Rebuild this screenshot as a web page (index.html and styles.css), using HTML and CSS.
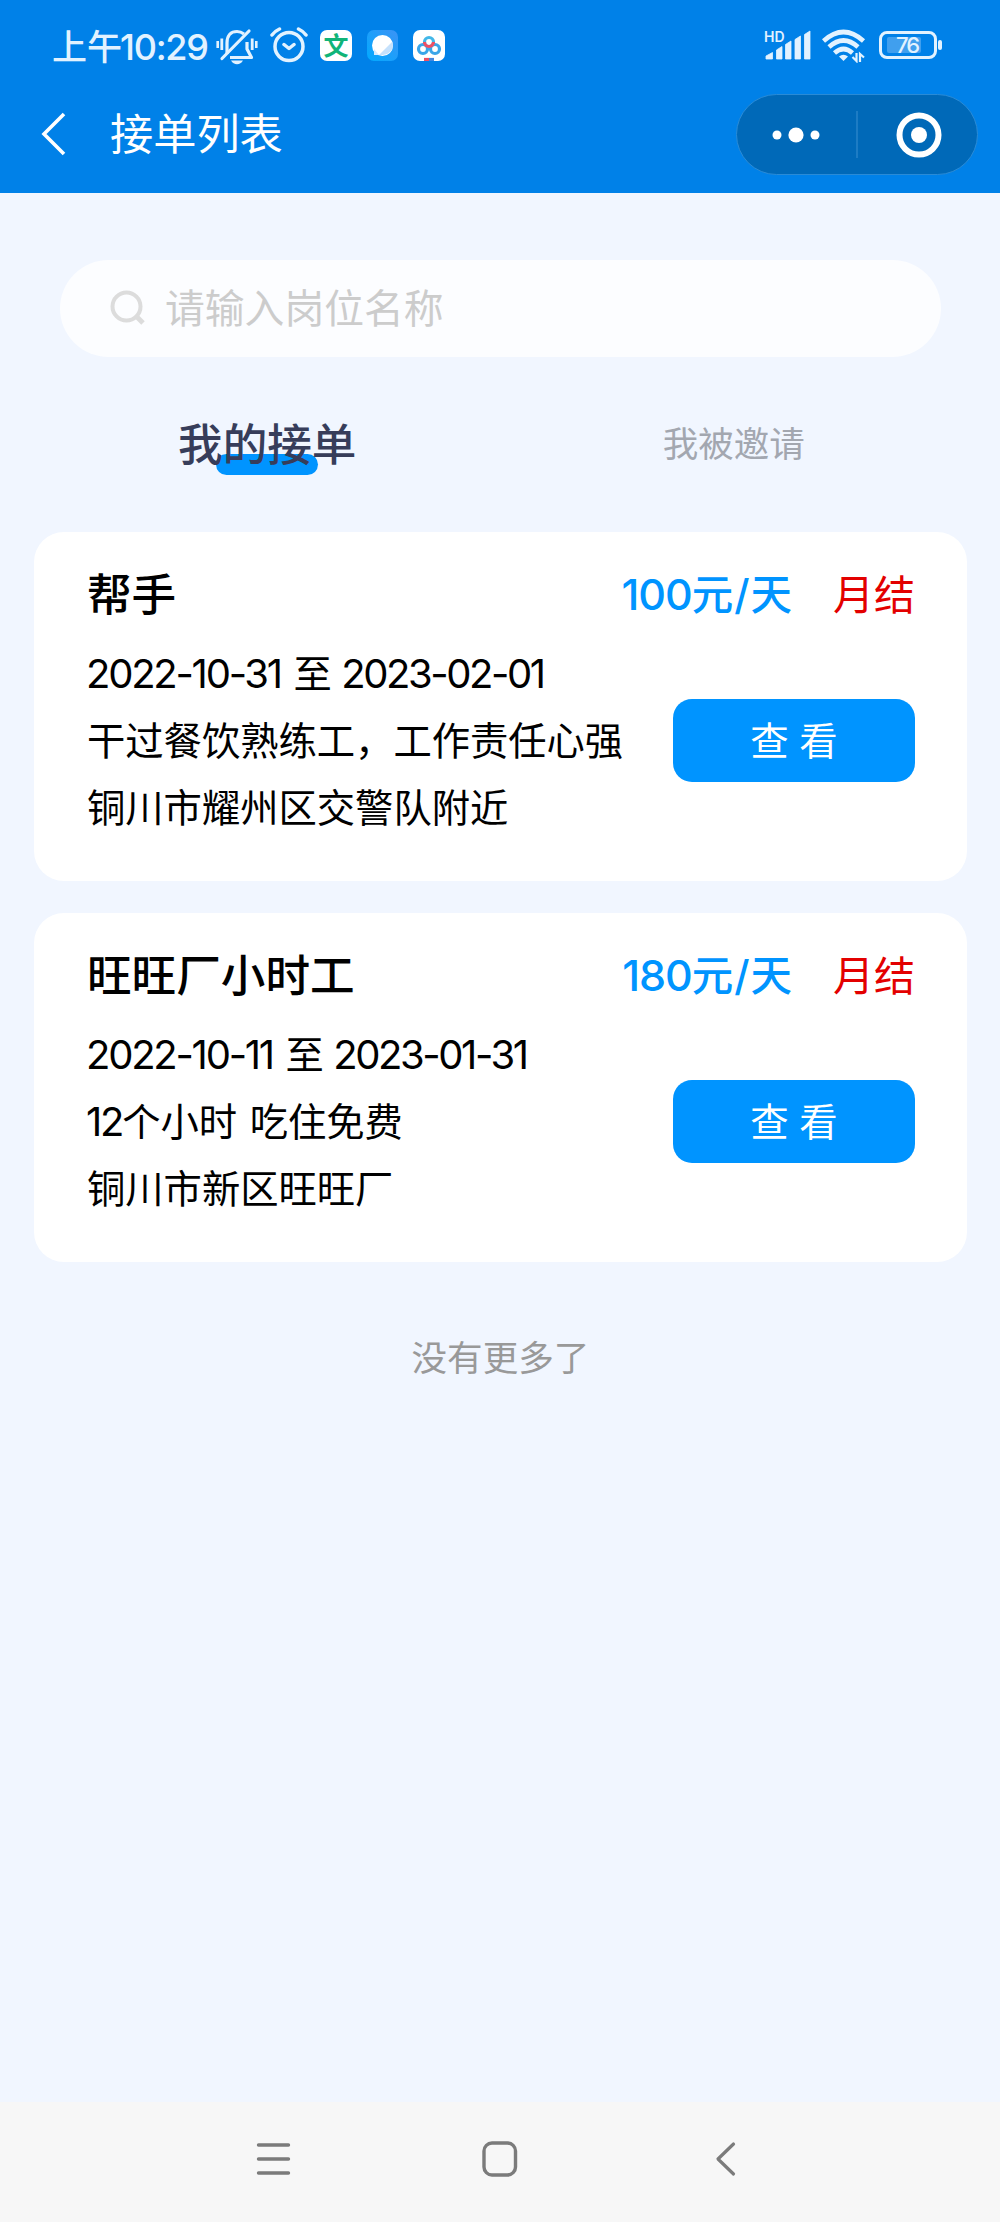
FILE: index.html
```html
<!DOCTYPE html>
<html lang="zh-CN">
<head>
<meta charset="utf-8">
<title>接单列表</title>
<link rel="stylesheet" href="styles.css">
</head>
<body>
<header class="header">
  <div class="status">
    <div class="status-left">
      <span class="clock">上午<span class="num">10:29</span></span>
      <svg class="bell" width="42" height="38" viewBox="0 0 42 38" fill="none" stroke="#e2f2ff" stroke-width="3.2">
        <path d="M11 26V15C11 7 15 3.500 21 3.500C24 3.500 26 4.500 28 6M31 14V21L35.500 29.500H14" stroke-linejoin="round"/>
        <path d="M6 30.500L33 3" stroke-linecap="round"/>
        <path d="M5.800 10.500V22M36.200 10.500V22" stroke-width="2.800"/><path d="M1.700 13V20M40.300 13V20" stroke-width="2.600"/>
        <path d="M15 32.500H27C25.500 35 23.500 36.200 21 36.200S16.500 35 15 32.500Z" fill="#e2f2ff" stroke="none"/>
      </svg>
      <svg class="alarm" width="38" height="36" viewBox="0 0 38 36" fill="none" stroke="#e2f2ff" stroke-width="3.500" stroke-linecap="round" stroke-linejoin="round">
        <circle cx="19" cy="19.500" r="14"/><path d="M2 8Q5 4 9.500 2M36 8Q33 4 28.500 2M14 17.500L19 21.500L24 17.500"/>
      </svg>
      <span class="app app-text">文</span>
      <svg class="app" width="31" height="31" viewBox="0 0 31 31">
        <defs><linearGradient id="sky" x1="0" y1="1" x2="1" y2="0"><stop offset="0" stop-color="#00aaff"/><stop offset="1" stop-color="#3c93f5"/></linearGradient></defs>
        <rect width="31" height="31" rx="7" fill="url(#sky)"/><circle cx="15.500" cy="15.500" r="10.500" fill="#fff"/><path d="M25.500 11.500L12 25H16A10 10 0 0 0 26 15Z" fill="#c5e1fc"/><path d="M7 19V25H12Z" fill="#d5ecff"/>
      </svg>
      <svg class="app" width="32" height="31" viewBox="0 0 32 31" fill="none" stroke-width="3.200">
        <rect width="32" height="31" rx="7" fill="#fff"/><circle cx="10" cy="19" r="4.500" stroke="#3aa5e8"/><circle cx="22" cy="19" r="4.500" stroke="#3aa5e8"/><circle cx="16" cy="12" r="4.500" stroke="#42b7e8"/><path d="M11.500 12A4.500 4.500 0 0 0 20.500 12" stroke="#ef4e63"/><path d="M11 29.500H16" stroke="#ef4e63"/><path d="M16 29.500H21" stroke="#4287df"/>
      </svg>
    </div>
    <div class="status-right">
      <div class="signal">
        <span class="hd">HD</span>
        <svg width="47" height="32" viewBox="0 0 47 32" fill="#e2f2ff" stroke="#e2f2ff" stroke-width="0.800" stroke-linejoin="round">
          <path d="M2 30V27L8.500 23.500V30ZM12.500 30V21L18 17.500V30ZM21.500 30V15.500L27 12V30ZM31 30V10.500L36.500 7V30ZM40.500 30V5.500L46 2V30Z"/>
        </svg>
      </div>
      <svg class="wifi" width="44" height="34" viewBox="0 0 44 34" fill="none" stroke="#e2f2ff" stroke-width="4.600">
        <path d="M1.500 12Q21.500-6 41.500 12M7 18Q21.500 5 36 18M12.500 24Q21.500 16 30.500 24"/><path d="M17 27.500Q21.500 24 26 27.500L21.500 32Z" fill="#e2f2ff" stroke="none"/>
        <path d="M34.500 24V32L30.500 28M38 33V25L42 28.500" stroke-width="2.200"/>
      </svg>
      <span class="battery"><span class="level">76</span></span>
    </div>
  </div>
  <div class="titlebar">
    <svg class="back" width="26" height="44" viewBox="0 0 26 44" fill="none" stroke="#fff" stroke-width="3.600"><path d="M23 2L3 22L23 42"/></svg>
    <h1 class="page-title">接单列表</h1>
    <div class="capsule">
      <svg class="dots" width="48" height="16" viewBox="0 0 48 16" fill="#fff"><circle cx="5" cy="8" r="4.500"/><circle cx="24" cy="8" r="7.600"/><circle cx="43" cy="8" r="4.500"/></svg>
      <i class="divider"></i>
      <svg class="target" width="46" height="46" viewBox="0 0 46 46"><circle cx="23" cy="23" r="19.500" fill="none" stroke="#fff" stroke-width="6"/><circle cx="23" cy="23" r="8" fill="#fff"/></svg>
    </div>
  </div>
</header>
<main class="content">
  <div class="search">
    <svg width="38" height="38" viewBox="0 0 38 38" fill="none" stroke="#dcdcdc" stroke-width="4"><circle cx="17.500" cy="17.500" r="14"/><path d="M27 27L34 34" stroke-width="5"/></svg>
    <span>请输入岗位名称</span>
  </div>
  <nav class="tabs">
    <span class="tab active">我的接单</span>
    <span class="tab">我被邀请</span>
  </nav>
  <section class="card">
    <div class="card-head"><h2>帮手</h2><span class="price"><span class="num">100</span>元<span class="slash">/</span>天</span><span class="settle">月结</span></div>
    <div class="card-body">
      <div class="lines">
        <p><span class="num">2022-10-31</span> 至 <span class="num until">2023-02-01</span></p>
        <p>干过餐饮熟练工，工作责任心强</p>
        <p>铜川市耀州区交警队附近</p>
      </div>
      <span class="button">查 看</span>
    </div>
  </section>
  <section class="card">
    <div class="card-head"><h2>旺旺厂小时工</h2><span class="price"><span class="num">180</span>元<span class="slash">/</span>天</span><span class="settle">月结</span></div>
    <div class="card-body">
      <div class="lines">
        <p><span class="num">2022-10-11</span> 至 <span class="num until">2023-01-31</span></p>
        <p><span class="num">12</span>个小时 吃住免费</p>
        <p>铜川市新区旺旺厂</p>
      </div>
      <span class="button">查 看</span>
    </div>
  </section>
  <p class="end">没有更多了</p>
</main>
<footer class="navbar">
  <svg width="36" height="36" viewBox="0 0 36 36" stroke="#7b7b7b" stroke-width="3.400" stroke-linecap="round"><path d="M2.500 4H32.500M2.500 18H32.500M2.500 32H32.500"/></svg>
  <svg width="36" height="36" viewBox="0 0 36 36" fill="none" stroke="#7b7b7b" stroke-width="3.400"><rect x="2" y="2" width="31.500" height="32" rx="8"/></svg>
  <svg width="36" height="36" viewBox="0 0 36 36" fill="none" stroke="#7b7b7b" stroke-width="3.200" stroke-linecap="round" stroke-linejoin="round"><path d="M25.500 3L10 18L25.500 33"/></svg>
</footer>
</body>
</html>
```
FILE: styles.css
```css
* { box-sizing: border-box; margin: 0; padding: 0; }
body {
  display: flex; flex-direction: column; height: 2222px;
  background: #f1f6ff; color: #000;
  font-family: "Noto Sans CJK SC", sans-serif;
}
svg { display: block; flex: none; }
h1, h2, p, span { white-space: nowrap; }
.num { font-family: Inter, sans-serif; font-size: 40px; line-height: 0; letter-spacing: -0.056em; }

.header { height: 193px; background: #0081e8; color: #fff; flex: none; }
.status { display: flex; justify-content: space-between; height: 90px; padding: 0 58px 0 52px; color: #e2f2ff; }
.status-left, .status-right { display: flex; align-items: center; }
.clock { width: 164px; font-size: 35px; font-weight: 500; line-height: 86px; }
.clock .num { margin-left: -2px; font-size: 36px; letter-spacing: -0.035em; }
.bell { margin-top: 3px; }
.alarm { margin-left: 12px; }
.app { margin-left: 15px; margin-top: 1px; }
.alarm + .app { margin-left: 12px; }
.app-text { width: 32px; height: 31px; border-radius: 7px; background: #fff; color: #10b479; font-size: 25px; font-weight: 700; line-height: 29px; text-align: center; }
.signal { display: grid; }
.signal > * { grid-area: 1 / 1; }
.hd { font: 600 14px/16px Inter, sans-serif; }
.wifi { margin-left: 11px; margin-top: 2px; }
.battery { position: relative; width: 58px; height: 28px; margin-left: 13px; margin-right: 5px; padding: 3px 5px; border: 3px solid #e2f2ff; border-radius: 8px; }
.battery::after { content: ""; position: absolute; right: -8px; top: 6px; width: 4px; height: 10px; border-radius: 2px; background: #e2f2ff; }
.level { display: block; width: 34px; height: 16px; border-radius: 2px; background: #409fee; font: 500 22px/17px Inter, sans-serif; letter-spacing: -2px; text-indent: 9px; }
.titlebar { display: flex; align-items: center; height: 87px; padding: 0 22px 0 41px; }
.page-title { margin-left: 43px; margin-top: -5px; font-size: 43.2px; font-weight: 400; line-height: 80px; }
.capsule { display: flex; align-items: center; width: 242px; height: 81px; margin-left: auto; margin-top: 2px; padding: 0 35px; border: 1px solid #2a8bd6; border-radius: 41px; background: #0069b8; }
.divider { width: 2px; height: 47px; margin-left: 36px; background: #1d7cc4; }
.target { margin-left: auto; }

.content { flex: 1; padding: 67px 33px 0 34px; }
.search { display: flex; align-items: center; gap: 18px; height: 97px; margin: 0 26px; padding-left: 49px; padding-bottom: 2px; border-radius: 49px; background: #fcfdff; color: #ccc; font-size: 39.8px; line-height: 92px; }
.search span { margin-top: -4px; }
.tabs { display: grid; grid-template-columns: 1fr 1fr; height: 175px; align-items: start; padding-top: 45px; }
.tab { justify-self: center; color: #a3a7b0; font-size: 35.5px; line-height: 80px; }
.active { position: relative; z-index: 0; color: #373d5a; font-size: 44.6px; font-weight: 500; }
.active::before { content: ""; position: absolute; z-index: -1; left: 38px; top: 52px; width: 102px; height: 21px; border-radius: 11px; background: #0094ff; }

.card { height: 349px; margin-bottom: 32px; padding: 30px 52px 0 53px; border-radius: 30px; background: #fff; }
.card-head { display: flex; align-items: center; height: 60px; }
.card-head h2 { margin-right: auto; font-size: 44.6px; font-weight: 500; line-height: 60px; }
.price { color: #0094ff; font-size: 41.500px; font-weight: 500; line-height: 60px; }
.price .num { font-size: 43px; letter-spacing: -0.025em; }
.slash { margin: 0 1px; font-family: Inter, sans-serif; line-height: 0; }
.settle { margin-left: 41px; color: #e30000; font-size: 41px; line-height: 60px; }
.card-body { display: flex; justify-content: space-between; margin-top: 16px; }
.lines { width: 540px; font-size: 38.300px; line-height: 67px; word-spacing: 4px; }
.lines .num { margin-left: -1px; }
.lines .until { margin-left: -3px; letter-spacing: -0.061em; }
.button { width: 242px; height: 83px; margin-top: 61px; border-radius: 19px; background: #0094ff; color: #fff; font-size: 38.400px; line-height: 79px; text-align: center; word-spacing: 2px; }
.end { margin-top: 64px; color: #999; font-size: 35.600px; line-height: 60px; text-align: center; }

.navbar { display: flex; justify-content: center; gap: 190px; height: 120px; padding-top: 39px; background: #f7f7f7; flex: none; }
```
